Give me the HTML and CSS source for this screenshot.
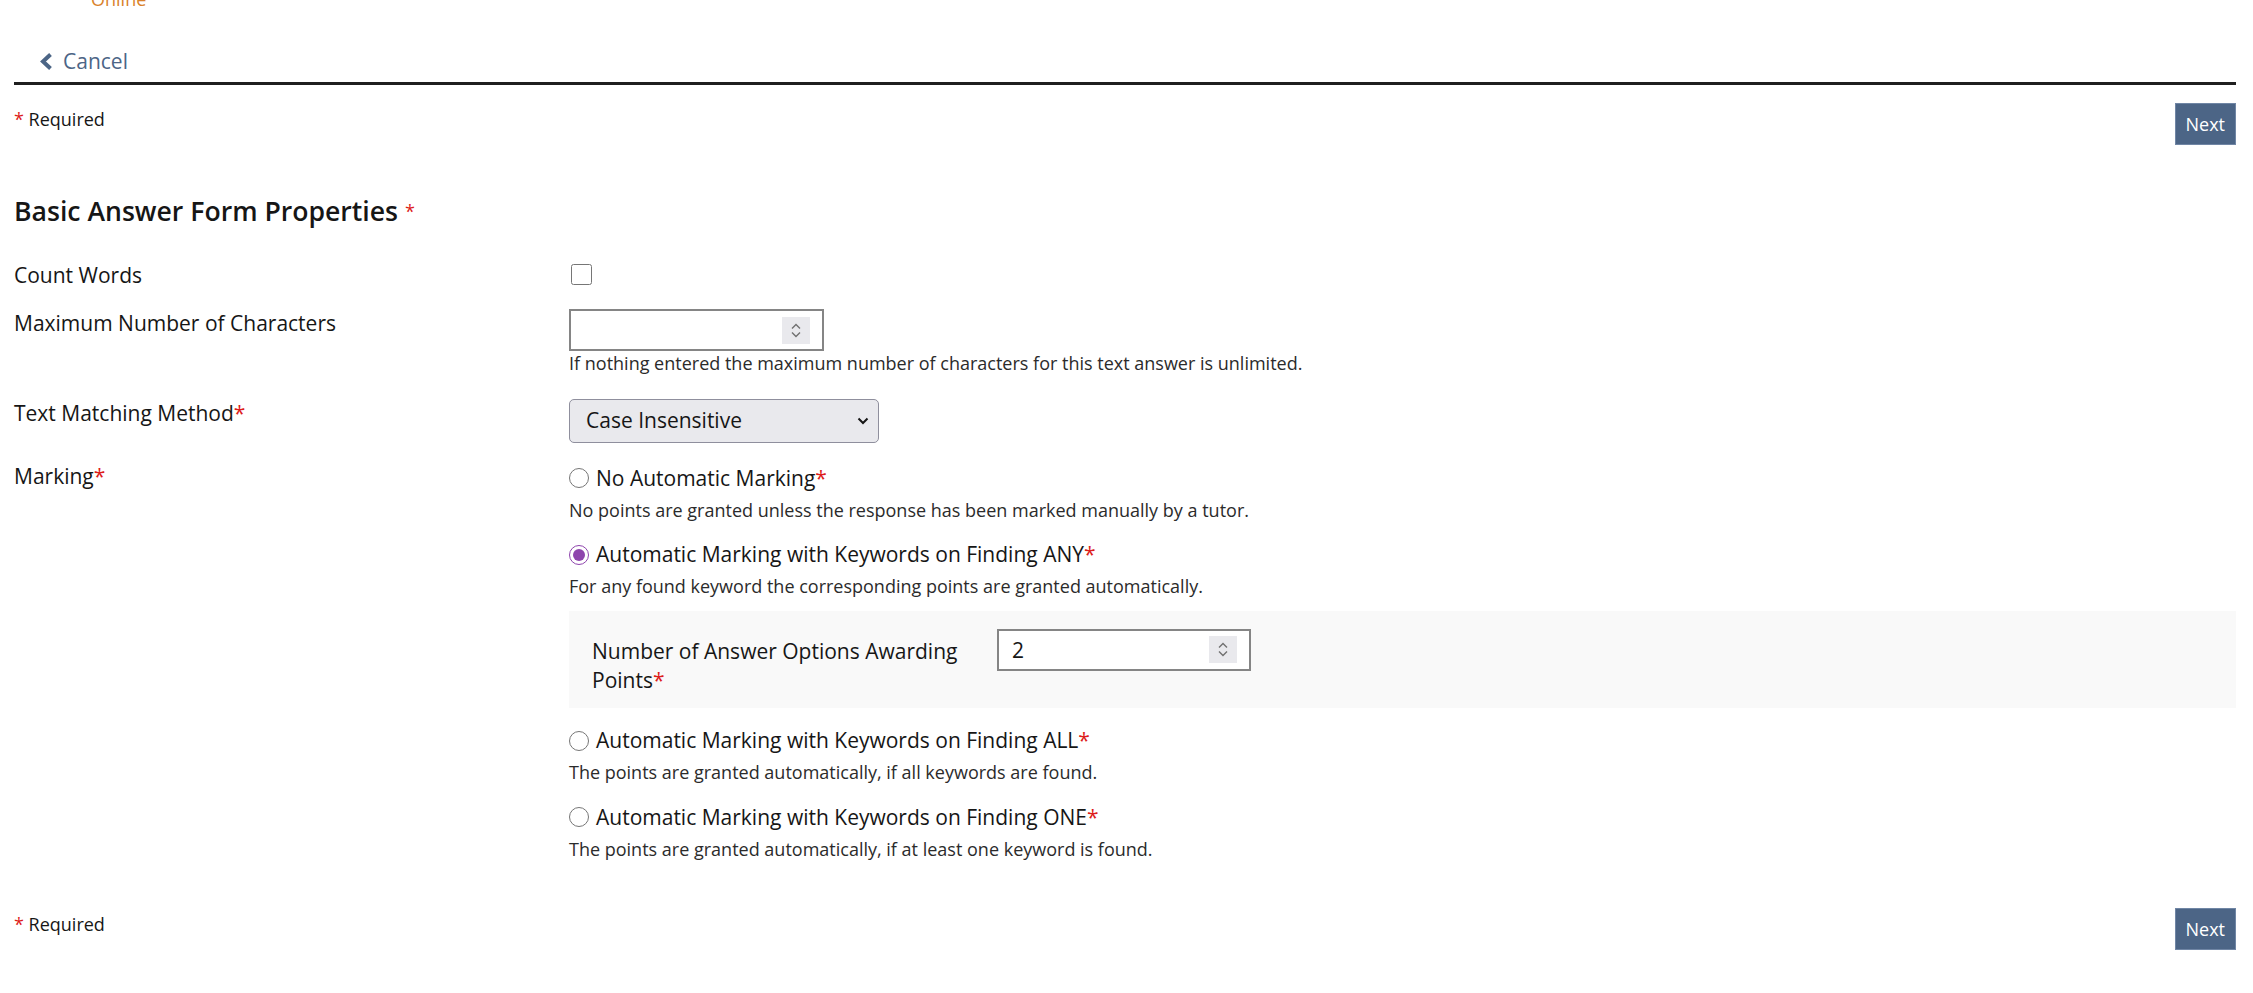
FILE: index.html
```html
<!DOCTYPE html>
<html lang="en">
<head>
<meta charset="utf-8">
<title>Basic Answer Form Properties</title>
<link rel="stylesheet" href="styles.css">
</head>
<body>
<div class="page">
  <div class="status">Online</div>
  <nav class="tabs">
    <a class="back" href="#">
      <svg class="back-ico" width="14" height="19" viewBox="0 0 14 19"><polyline points="11.5,2.5 4,9.5 11.5,16.5" fill="none" stroke="#4c6586" stroke-width="4"/></svg>
      <span>Cancel</span>
    </a>
  </nav>
  <form class="form">
    <div class="cmdrow">
      <span class="req"><span class="ast">*</span> Required</span>
      <button type="button" class="btn">Next</button>
    </div>

    <h2 class="section">Basic Answer Form Properties<span class="ast hast">*</span></h2>

    <div class="row">
      <div class="lbl">Count Words</div>
      <div class="ctl"><input type="checkbox" class="chk" aria-label="Count Words"></div>
    </div>

    <div class="row">
      <div class="lbl">Maximum Number of Characters</div>
      <div class="ctl">
        <div class="num">
          <input type="text" value="" aria-label="Maximum Number of Characters">
          <span class="spin"><svg width="28" height="27" viewBox="0 0 28 27"><polyline points="10,11.5 14,7.5 18,11.5" fill="none" stroke="#707070" stroke-width="1.4"/><polyline points="10,15.5 14,19.5 18,15.5" fill="none" stroke="#707070" stroke-width="1.4"/></svg></span>
        </div>
        <div class="help">If nothing entered the maximum number of characters for this text answer is unlimited.</div>
      </div>
    </div>

    <div class="row">
      <div class="lbl">Text Matching Method<span class="ast">*</span></div>
      <div class="ctl">
        <div class="sel">
          <select aria-label="Text Matching Method"><option>Case Insensitive</option><option>Case Sensitive</option></select>
          <svg class="sel-ico" width="12" height="8" viewBox="0 0 12 8"><polyline points="1.5,1.5 6,6 10.5,1.5" fill="none" stroke="#161616" stroke-width="2"/></svg>
        </div>
      </div>
    </div>

    <div class="row">
      <div class="lbl">Marking<span class="ast">*</span></div>
      <div class="ctl opts">
        <div class="opt">
          <div class="optlbl"><input type="radio" name="marking" class="rad" aria-label="No Automatic Marking"><span>No Automatic Marking<span class="ast">*</span></span></div>
          <div class="optdesc">No points are granted unless the response has been marked manually by a tutor.</div>
        </div>
        <div class="opt">
          <div class="optlbl"><input type="radio" name="marking" class="rad" checked aria-label="Finding ANY"><span>Automatic Marking with Keywords on Finding ANY<span class="ast">*</span></span></div>
          <div class="optdesc">For any found keyword the corresponding points are granted automatically.</div>
          <div class="sub">
            <div class="sub-lbl">Number of Answer Options Awarding Points<span class="ast">*</span></div>
            <div class="num num-sm">
              <input type="text" value="2" aria-label="Number of Answer Options Awarding Points">
              <span class="spin"><svg width="28" height="27" viewBox="0 0 28 27"><polyline points="10,11.5 14,7.5 18,11.5" fill="none" stroke="#707070" stroke-width="1.4"/><polyline points="10,15.5 14,19.5 18,15.5" fill="none" stroke="#707070" stroke-width="1.4"/></svg></span>
            </div>
          </div>
        </div>
        <div class="opt">
          <div class="optlbl"><input type="radio" name="marking" class="rad" aria-label="Finding ALL"><span>Automatic Marking with Keywords on Finding ALL<span class="ast">*</span></span></div>
          <div class="optdesc">The points are granted automatically, if all keywords are found.</div>
        </div>
        <div class="opt">
          <div class="optlbl"><input type="radio" name="marking" class="rad" aria-label="Finding ONE"><span>Automatic Marking with Keywords on Finding ONE<span class="ast">*</span></span></div>
          <div class="optdesc">The points are granted automatically, if at least one keyword is found.</div>
        </div>
      </div>
    </div>

    <div class="cmdrow cmdrow-bottom">
      <span class="req"><span class="ast">*</span> Required</span>
      <button type="button" class="btn">Next</button>
    </div>
  </form>
</div>
</body>
</html>
```

FILE: styles.css
```css
html, body {
  margin: 0;
  background: #fff;
}

body {
  font-family: "Open Sans", "Noto Sans", sans-serif;
  font-size: 21px;
  line-height: 28.8px;
  color: #161616;
}

.page {
  padding: 0 17px 0 14px;
}

.status {
  margin-top: -13px;
  padding-left: 77px;
  font-size: 18px;
  line-height: 24.7px;
  color: #d9822b;
}

.tabs {
  margin-top: 35px;
  padding: 0 0 5px 25px;
  border-bottom: 3px solid #1f1f1f;
}

.back {
  display: inline-flex;
  align-items: center;
  gap: 10px;
  color: #4c6586;
  text-decoration: none;
}

.back-ico {
  display: block;
}

.ast {
  color: #dd1c1a;
}

.cmdrow {
  display: flex;
  justify-content: space-between;
  align-items: flex-start;
  margin-top: 18px;
}

.cmdrow-bottom {
  margin-top: 47px;
}

.req {
  margin-top: 4px;
  font-size: 18px;
  line-height: 24.7px;
}

.btn {
  height: 42px;
  padding: 0 10px;
  border: 1px solid #7086a5;
  border-radius: 0;
  background: #4c6586;
  color: #fff;
  font-family: inherit;
  font-size: 18px;
  line-height: 40px;
}

.section {
  margin: 49px 0 33px;
  font-size: 26.6px;
  line-height: 34px;
  font-weight: 600;
}

.hast {
  font-size: 18px;
  font-weight: 400;
  margin-left: 7px;
  vertical-align: 3px;
  line-height: 1;
}

.row {
  display: grid;
  grid-template-columns: 555px 1fr;
  margin-bottom: 19px;
}

.chk {
  display: block;
  width: 21px;
  height: 21px;
  margin: 3px 0 0 2px;
}

.num {
  display: flex;
  align-items: center;
  width: 255px;
  height: 42px;
  box-sizing: border-box;
  border: 2px solid #858585;
  background: #fff;
}

.num-sm {
  width: 254px;
}

.num input {
  flex: 1;
  min-width: 0;
  height: 100%;
  border: 0;
  outline: 0;
  padding: 0 0 0 13px;
  background: transparent;
  font: inherit;
  color: #161616;
}

.spin {
  display: flex;
  width: 28px;
  height: 27px;
  margin-right: 12px;
  background: #e9e9ed;
}

.help {
  margin-bottom: 4px;
  font-size: 18px;
  line-height: 24.7px;
  color: #2b2b2b;
}

.sel {
  display: flex;
  align-items: center;
  width: 310px;
  height: 44px;
  box-sizing: border-box;
  border: 1px solid #8f8f9d;
  border-radius: 5px;
  background: #e9e9ed;
}

.sel select {
  -webkit-appearance: none;
  appearance: none;
  flex: 1;
  min-width: 0;
  height: 100%;
  border: 0;
  outline: 0;
  padding: 0 0 0 16px;
  background: transparent;
  font: inherit;
  color: #161616;
}

.sel-ico {
  display: block;
  margin-right: 9px;
}

.opts {
  padding-top: 2px;
}

.opt + .opt {
  margin-top: 18px;
}

.optlbl {
  display: flex;
  align-items: center;
  gap: 7px;
}

.rad {
  width: 20px;
  height: 20px;
  margin: 0;
  accent-color: #8e44ad;
}

.optdesc {
  margin-top: 5px;
  font-size: 18px;
  line-height: 24.7px;
  color: #2b2b2b;
}

.sub {
  display: grid;
  grid-template-columns: 405px 254px;
  margin-top: 12px;
  padding: 18px 0 14px 23px;
  background: #f9f9f9;
}

.sub-lbl {
  padding-top: 8px;
}
```
